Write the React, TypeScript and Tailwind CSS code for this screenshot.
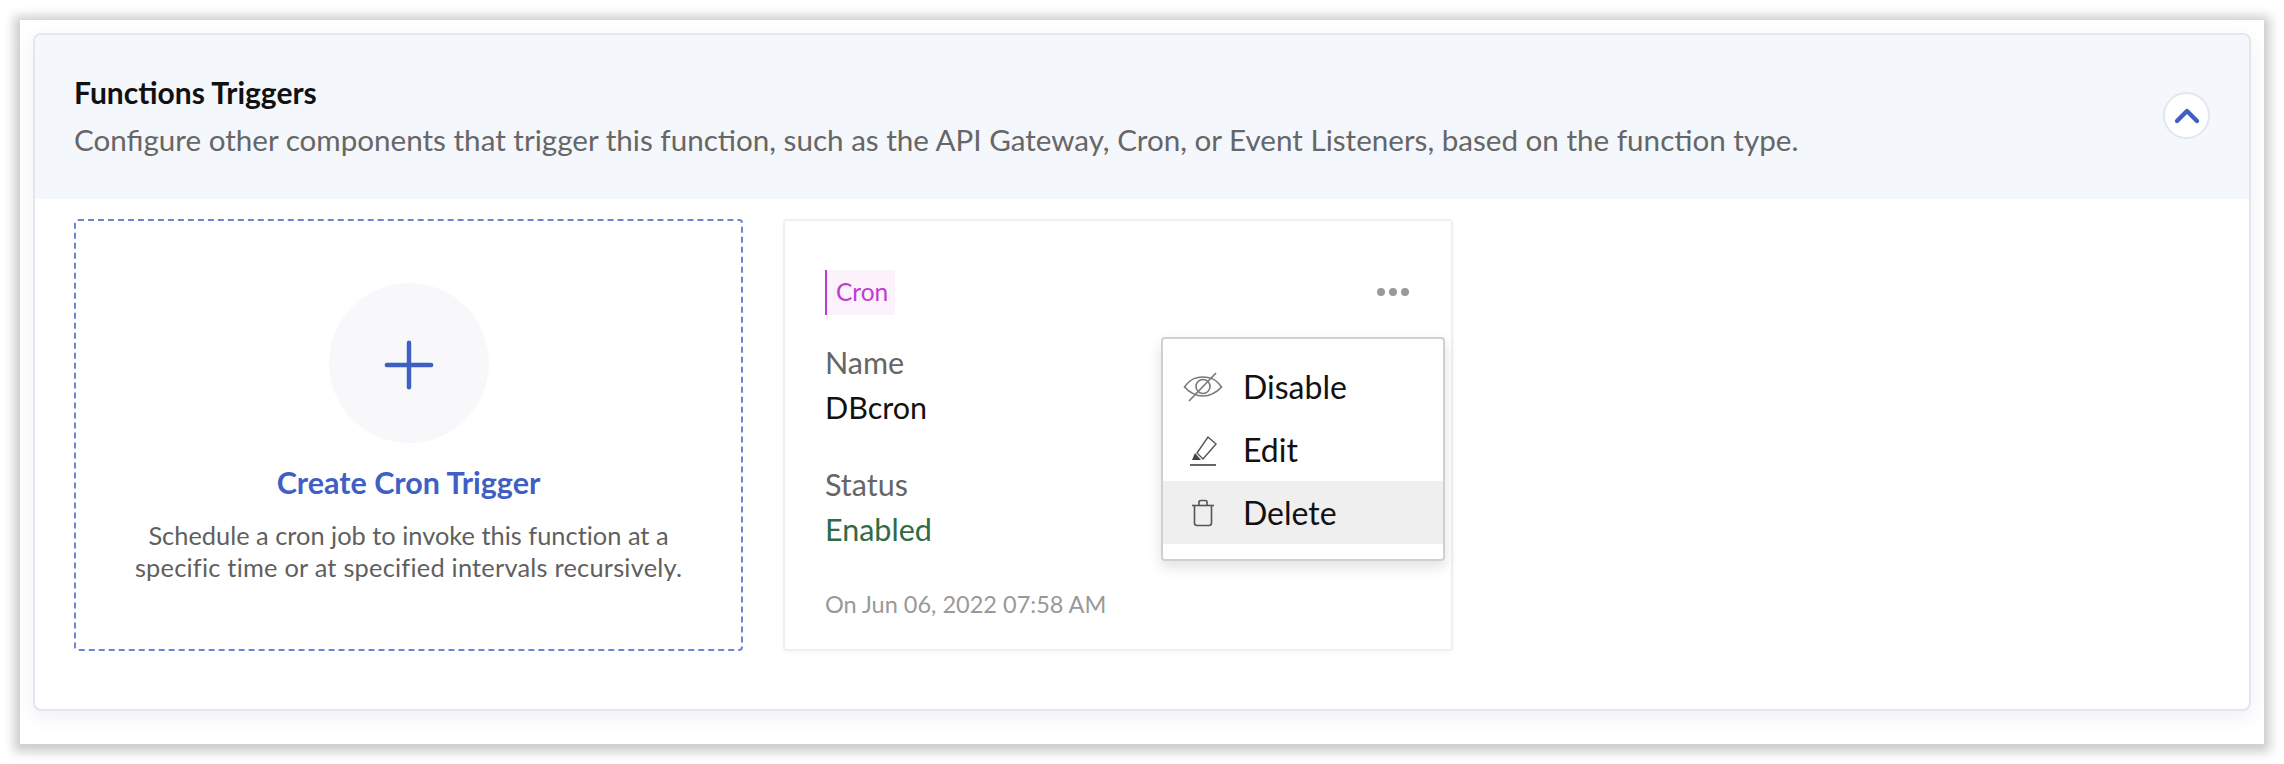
import { ChevronUp, Plus } from "lucide-react";

function EyeOffIcon() {
  return (
    <svg width="40" height="30" viewBox="0 0 40 30" fill="none" stroke="#777" strokeWidth="1.6">
      <path d="M1.5 15 C8 6 14 5 20 5 C26 5 32 6 38.5 15 C32 22 26 24 20 24 C14 24 8 22 1.5 15 Z" />
      <circle cx="20" cy="14.5" r="7" />
      <path d="M6 29 L33 1" />
    </svg>
  );
}

function EditIcon() {
  return (
    <svg width="28" height="32" viewBox="0 0 28 32" fill="none" stroke="#555" strokeWidth="1.4">
      <path d="M8 19 L19 3 L27 10 L14 25 Z" />
      <path d="M3 26 L6 19 L12 26 Z" fill="#444" stroke="none" />
      <path d="M1 31 L27 31" strokeWidth="1.8" />
    </svg>
  );
}

function TrashIcon() {
  return (
    <svg width="24" height="28" viewBox="0 0 24 28" fill="none" stroke="#555" strokeWidth="1.6" strokeLinejoin="round">
      <path d="M1 6.5 L23 6.5" />
      <path d="M8 6 V3 C8 2 9 1.5 10 1.5 H14 C15 1.5 16 2 16 3 V6" />
      <path d="M3.5 7 V24 C3.5 25.5 4.5 26.5 6 26.5 H18 C19.5 26.5 20.5 25.5 20.5 24 V7" />
    </svg>
  );
}

function MenuItem({ icon, label, active }: { icon: React.ReactNode; label: string; active?: boolean }) {
  return (
    <div className={`flex h-[63px] items-center ${active ? "bg-[#efeff0]" : ""}`}>
      <div className="flex w-[80px] shrink-0 justify-center">{icon}</div>
      <span className="text-[32px] text-[#111]">{label}</span>
    </div>
  );
}

export default function App() {
  return (
    <div className="h-[764px] w-[2284px] bg-white p-5 font-['Lato',sans-serif]">
      <div className="h-[724px] bg-white p-[13px] shadow-[0_2px_10px_6px_rgba(0,0,0,0.2)]">
        <div className="h-[678px] overflow-hidden rounded-lg border-2 border-[#e3e5f0] bg-white shadow-[0_6px_20px_rgba(60,70,130,0.08)]">
          <div className="flex h-[164px] items-center justify-between bg-[#f4f7fb] px-[39px]">
            <div className="pb-[2px]">
              <h2 className="text-[30px] font-bold leading-[47px] text-[#111]">Functions Triggers</h2>
              <p className="text-[29.6px] leading-[47px] text-[#666]">
                Configure other components that trigger this function, such as the API Gateway, Cron, or Event Listeners, based on the function type.
              </p>
            </div>
            <button className="mb-[3px] flex h-[47px] w-[47px] items-center justify-center rounded-full border-2 border-[#e3e6ef] bg-white">
              <ChevronUp size={40} strokeWidth={2.6} color="#3f5fc4" className="shrink-0" />
            </button>
          </div>
          <div className="flex gap-[40px] pl-[39px] pt-[20px]">
            <div className="flex h-[432px] w-[669px] flex-col items-center rounded border-2 border-dashed border-[#6f86cf] pt-[62px]">
              <div className="flex h-40 w-40 items-center justify-center rounded-full bg-[#f8f8fb]">
                <Plus size={76} strokeWidth={1.4} color="#3f5fc4" className="mt-[3px]" />
              </div>
              <div className="mt-[17px] text-[30.5px] font-bold leading-[44px] text-[#3f5fc4]">Create Cron Trigger</div>
              <p className="mt-[15px] text-center text-[25.4px] leading-[32px] text-[#5f5f5f] [font-variant-ligatures:none]">
                Schedule a cron job to invoke this function at a
                <br />
                <span className="tracking-[0.22px]">specific time or at specified intervals recursively.</span>
              </p>
            </div>
            <div className="relative h-[432px] w-[670px] rounded border-2 border-[#f0f0f4] bg-white pl-[40px] pt-[49px] shadow-[0_1px_4px_rgba(0,0,0,0.04)]">
              <div className="flex items-start justify-between pr-[42px]">
                <span className="flex h-[45px] items-center border-l-2 border-[#b93ecb] bg-[#fbf2fc] pl-[9px] pr-[7px] text-[24.5px] text-[#c03ad3]">
                  Cron
                </span>
                <span className="mt-[18px] flex gap-[4px]">
                  <span className="h-[8px] w-[8px] rounded-full bg-[#999]" />
                  <span className="h-[8px] w-[8px] rounded-full bg-[#999]" />
                  <span className="h-[8px] w-[8px] rounded-full bg-[#999]" />
                </span>
              </div>
              <div className="mt-[25px] text-[30.5px] leading-[45px] text-[#666]">Name</div>
              <div className="text-[30.5px] leading-[45px] text-[#111]">DBcron</div>
              <div className="mt-[32px] text-[30.5px] leading-[45px] text-[#666]">Status</div>
              <div className="text-[30.5px] leading-[45px] text-[#2f6b45]">Enabled</div>
              <div className="mt-[36px] text-[23.5px] leading-[32px] text-[#999]">On Jun 06, 2022 07:58 AM</div>
              <div className="absolute left-[376px] top-[116px] h-[224px] w-[284px] rounded border-2 border-[#d0d0d0] bg-white pt-[16px] shadow-[0_6px_14px_rgba(0,0,0,0.12)]">
                <MenuItem icon={<EyeOffIcon />} label="Disable" />
                <MenuItem icon={<EditIcon />} label="Edit" />
                <MenuItem icon={<TrashIcon />} label="Delete" active />
              </div>
            </div>
          </div>
        </div>
      </div>
    </div>
  );
}
